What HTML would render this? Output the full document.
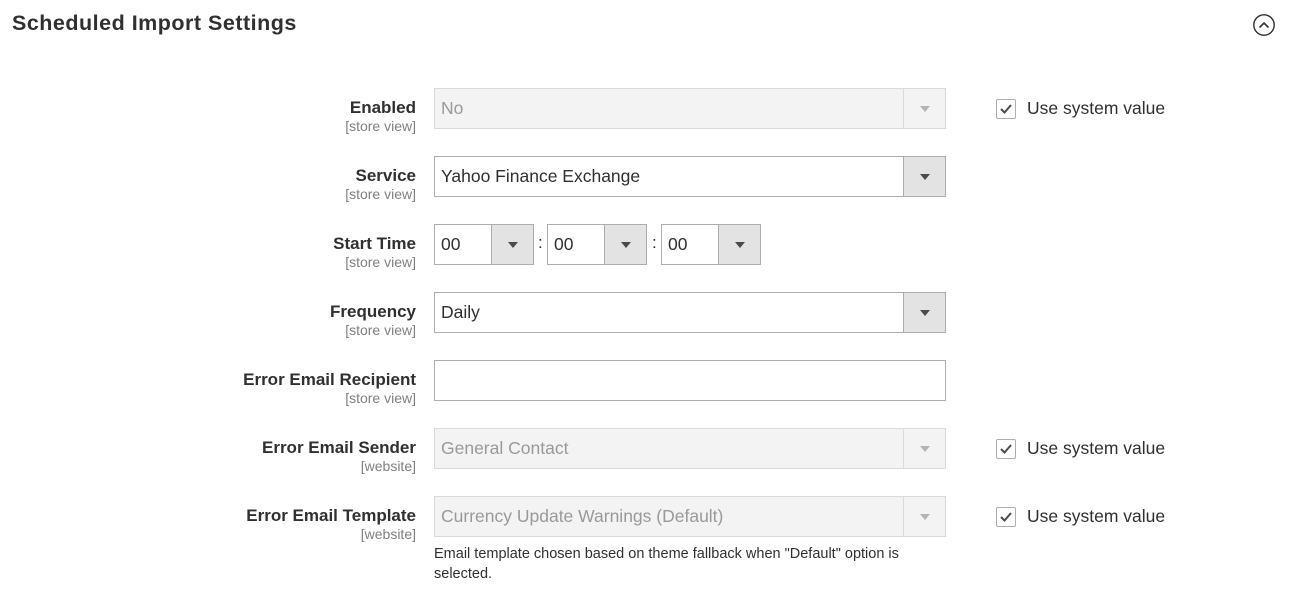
<!DOCTYPE html>
<html><head><meta charset="utf-8"><style>
*{box-sizing:border-box;margin:0;padding:0}
body{width:1289px;height:601px;background:#fff;font-family:"Liberation Sans",sans-serif;color:#303030;position:relative;overflow:hidden}
.a{position:absolute}
h1{position:absolute;left:12px;top:11px;font-size:21.5px;font-weight:bold;color:#303030;letter-spacing:0.5px;white-space:nowrap}
.lab{position:absolute;right:873px;text-align:right;white-space:nowrap}
.lab b{display:block;font-size:17px;font-weight:bold;color:#303030;line-height:20px}
.lab span{display:block;font-size:14px;color:#808080;line-height:17px}
.sel{position:absolute;height:41px;border:1px solid #adadad;background:#fff;font-size:17.5px;line-height:39px;padding-left:6px;color:#303030;white-space:nowrap}
.sel .btn{position:absolute;right:0;top:0;bottom:0;width:42px;background:#e3e3e3;border-left:1px solid #adadad}
.sel .btn:after{content:"";position:absolute;left:16px;top:17px;border-left:5px solid transparent;border-right:5px solid transparent;border-top:6px solid #514943}
.dis{background:#f3f3f3;border-color:#dadada;color:#999}
.dis .btn{background:#f3f3f3;border-left-color:#dadada}
.dis .btn:after{border-top-color:#b4b4b4}
.chk{position:absolute;left:996px;width:20px;height:20px;border:1px solid #adadad;border-radius:2px}
.chk svg{position:absolute;left:2px;top:2px}
.cl{position:absolute;left:1027px;font-size:17.5px;color:#303030;white-space:nowrap}
</style></head><body>
<h1>Scheduled Import Settings</h1>
<svg class="a" style="left:1252px;top:13px" width="24" height="24" viewBox="0 0 24 24"><circle cx="12" cy="12" r="10.2" fill="none" stroke="#303030" stroke-width="1.4"/><path d="M7.5 14.5 L12 10 L16.5 14.5" fill="none" stroke="#303030" stroke-width="1.6"/></svg>

<div class="lab" style="top:98px"><b>Enabled</b><span>[store view]</span></div>
<div class="sel dis" style="left:434px;top:88px;width:512px">No<div class="btn"></div></div>
<div class="chk" style="top:99px"><svg width="14" height="14" viewBox="0 0 14 14"><path d="M2 7 L5.5 10.5 L12 3" fill="none" stroke="#514943" stroke-width="2"/></svg></div>
<div class="cl" style="top:98px">Use system value</div>

<div class="lab" style="top:166px"><b>Service</b><span>[store view]</span></div>
<div class="sel" style="left:434px;top:156px;width:512px">Yahoo Finance Exchange<div class="btn"></div></div>

<div class="lab" style="top:234px"><b>Start Time</b><span>[store view]</span></div>
<div class="sel" style="left:434px;top:224px;width:100px">00<div class="btn"></div></div>
<div class="a" style="left:538px;top:233px;font-size:17px">:</div>
<div class="sel" style="left:547px;top:224px;width:100px">00<div class="btn"></div></div>
<div class="a" style="left:652px;top:233px;font-size:17px">:</div>
<div class="sel" style="left:661px;top:224px;width:100px">00<div class="btn"></div></div>

<div class="lab" style="top:302px"><b>Frequency</b><span>[store view]</span></div>
<div class="sel" style="left:434px;top:292px;width:512px">Daily<div class="btn"></div></div>

<div class="lab" style="top:370px"><b>Error Email Recipient</b><span>[store view]</span></div>
<div class="sel" style="left:434px;top:360px;width:512px"></div>

<div class="lab" style="top:438px"><b>Error Email Sender</b><span>[website]</span></div>
<div class="sel dis" style="left:434px;top:428px;width:512px">General Contact<div class="btn"></div></div>
<div class="chk" style="top:439px"><svg width="14" height="14" viewBox="0 0 14 14"><path d="M2 7 L5.5 10.5 L12 3" fill="none" stroke="#514943" stroke-width="2"/></svg></div>
<div class="cl" style="top:438px">Use system value</div>

<div class="lab" style="top:506px"><b>Error Email Template</b><span>[website]</span></div>
<div class="sel dis" style="left:434px;top:496px;width:512px">Currency Update Warnings (Default)<div class="btn"></div></div>
<div class="chk" style="top:507px"><svg width="14" height="14" viewBox="0 0 14 14"><path d="M2 7 L5.5 10.5 L12 3" fill="none" stroke="#514943" stroke-width="2"/></svg></div>
<div class="cl" style="top:506px">Use system value</div>
<div class="a" style="left:434px;top:544px;width:512px;font-size:14.5px;line-height:20px;color:#303030">Email template chosen based on theme fallback when "Default" option is selected.</div>
</body></html>
